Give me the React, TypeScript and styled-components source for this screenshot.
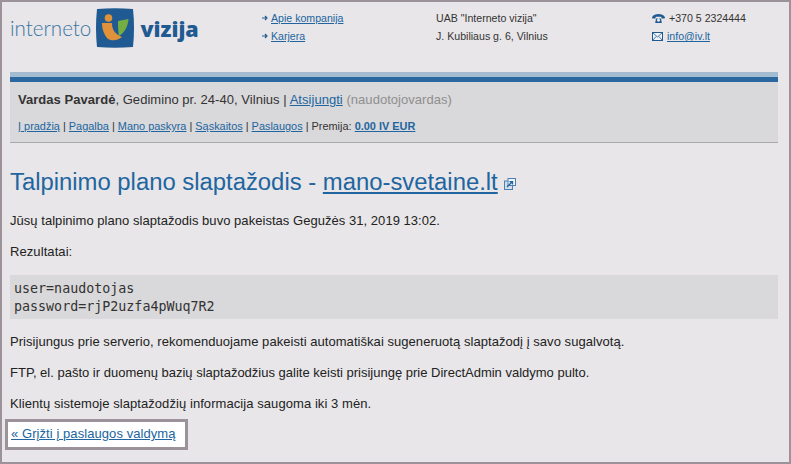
import React from "react"
import styled, { createGlobalStyle } from "styled-components"

const Global = createGlobalStyle`
  html, body {
    margin: 0;
    padding: 0;
    background: #e8e6e8;
  }
  body {
    font-family: "Liberation Sans", Arial, sans-serif;
    font-size: 13px;
    color: #222;
  }
`

const Frame = styled.div`
  box-sizing: border-box;
  width: 791px;
  height: 464px;
  overflow: hidden;
  border: 2px solid #9c9299;
  padding: 0 11px 0 8px;
  background: #e8e6e8;
`

const Header = styled.header`
  display: flex;
  height: 70px;
`

const Logo = styled.div`
  display: flex;
  flex: none;
  align-items: flex-start;
  width: 252px;
  padding-top: 6px;
`

const LogoThin = styled.span`
  font-family: "Lato", sans-serif;
  font-weight: 300;
  font-size: 20.6px;
  line-height: 28px;
  margin-top: 6px;
  color: #3a75a6;
`

const LogoBold = styled.span`
  font-family: "Open Sans", sans-serif;
  font-weight: 800;
  font-size: 21.5px;
  line-height: 28px;
  margin: 7px 0 0 5px;
  color: #1f5a92;
`

const LogoMark = styled.svg`
  margin-left: 4px;
  flex: none;
`

const HeadCol = styled.div<{ $w: number }>`
  width: ${(p) => p.$w}px;
  flex: none;
  padding-top: 7px;
  font-size: 10.6px;
  line-height: 18px;
  color: #333;
  display: flex;
  flex-direction: column;
`

const HeadRow = styled.div`
  display: flex;
  align-items: center;
  height: 18px;
`

const HeadIcon = styled.svg<{ $gap: number }>`
  flex: none;
  margin-right: ${(p) => p.$gap}px;
`

const Link = styled.a`
  color: #2065a0;
  text-decoration: underline;
  cursor: pointer;
`

const Panel = styled.section`
  background: #d9d8da;
  border-bottom: 1px solid #a9a8aa;
`

const PanelBar = styled.div`
  height: 5px;
  background: #a3bccf;
  border-bottom: 5px solid #2b689f;
`

const PanelBody = styled.div`
  padding: 10px 8px 0;
  height: 50px;
`

const UserLine = styled.div`
  font-size: 13px;
  letter-spacing: 0.04px;
  line-height: 16px;
  color: #333;
`

const Muted = styled.span`
  color: #8f8f8f;
`

const NavLine = styled.div`
  font-size: 10.93px;
  line-height: 14px;
  margin-top: 11px;
  color: #333;
`

const Title = styled.h1`
  font-size: 23.85px;
  line-height: 32px;
  font-weight: normal;
  margin: 23px 0 0;
  color: #2065a0;
`

const ExtIcon = styled.svg`
  margin-left: 6px;
  vertical-align: 0;
`

const Para = styled.p<{ $track?: number }>`
  margin: 0;
  font-size: 13px;
  letter-spacing: ${(p) => p.$track ?? 0}px;
  line-height: 16px;
  color: #222;
  padding-top: 15px;
`

const Code = styled.pre`
  margin: 15px 0 0;
  padding: 5px 4px 3px;
  background: #d9d8da;
  font-family: "DejaVu Sans Mono", monospace;
  font-size: 13.33px;
  line-height: 18px;
  color: #333;
`

const BackBox = styled.div`
  display: inline-block;
  margin: 7px 0 0 -5px;
  padding: 4px 9px 5px 3px;
  border: 3px solid #9c9299;
  background: #fff;
  font-size: 13px;
  letter-spacing: 0.07px;
  line-height: 16px;
`

const Arrow = () => (
  <HeadIcon $gap={3} width="6" height="6" viewBox="0 0 6 6">
    <path d="M0 3h4M3 1l2 2-2 2" fill="none" stroke="#1f5a92" strokeWidth="1.2" />
  </HeadIcon>
)

const Phone = () => (
  <HeadIcon $gap={4} width="13" height="9" viewBox="0 0 13 9">
    <path
      d="M0 3.2C1 .8 4 0 6.5 0S12 .8 13 3.2L12.6 4.4H9.6L9.2 2.7H3.8L3.4 4.4H.4zM3.2 9l.8-4.6h5L9.8 9zM6.5 4.6a1.6 1.6 0 1 0 .01 0z"
      fill="#1f5a92"
    />
  </HeadIcon>
)

const Mail = () => (
  <HeadIcon $gap={4} width="11" height="9" viewBox="0 0 11 9">
    <rect x=".5" y=".5" width="10" height="8" fill="#f2f3f6" stroke="#1f5a92" />
    <path d="M1 1l4.5 4L10 1M1 8l3.2-3.6M10 8L6.8 4.4" fill="none" stroke="#1f5a92" strokeWidth=".8" />
  </HeadIcon>
)

const External = () => (
  <ExtIcon width="12" height="12" viewBox="0 0 12 12">
    <rect x=".5" y="3" width="8" height="8.5" fill="#d3deea" stroke="#4c80b0" />
    <rect x="4" y=".5" width="7.5" height="7" fill="#f0f3f7" stroke="#4c80b0" />
    <path d="M3 9l5-5M5.5 3.6h3v3" fill="none" stroke="#2065a0" strokeWidth="1.3" />
  </ExtIcon>
)

export default function App() {
  return (
    <>
      <Global />
      <Frame>
        <Header>
          <Logo>
            <LogoThin>interneto</LogoThin>
            <LogoMark width="40" height="40" viewBox="0 0 40 40">
              <path d="M2 1Q20 -.5 38 1Q40 20 38 39Q20 40.5 2 39Q0 20 2 1z" fill="#1f5a92" />
              <circle cx="13.5" cy="10" r="3.8" fill="#e0923a" />
              <path d="M7 15H17C17 22 20 26 27 29C22 33 17 33 13 31C9 27 7 21 7 15z" fill="#e0923a" />
              <path d="M23 13L33.5 11C33 18 30 24 24 28C23 22 23 18 23 13z" fill="#74ae43" />
            </LogoMark>
            <LogoBold>vizija</LogoBold>
          </Logo>
          <HeadCol $w={174}>
            <HeadRow>
              <Arrow />
              <Link>Apie kompanija</Link>
            </HeadRow>
            <HeadRow>
              <Arrow />
              <Link>Karjera</Link>
            </HeadRow>
          </HeadCol>
          <HeadCol $w={216}>
            <HeadRow>UAB "Interneto vizija"</HeadRow>
            <HeadRow>J. Kubiliaus g. 6, Vilnius</HeadRow>
          </HeadCol>
          <HeadCol $w={123}>
            <HeadRow>
              <Phone />
              +370 5 2324444
            </HeadRow>
            <HeadRow>
              <Mail />
              <Link>info@iv.lt</Link>
            </HeadRow>
          </HeadCol>
        </Header>

        <Panel>
          <PanelBar />
          <PanelBody>
            <UserLine>
              <b>Vardas Pavardė</b>, Gedimino pr. 24-40, Vilnius | <Link>Atsijungti</Link>{" "}
              <Muted>(naudotojovardas)</Muted>
            </UserLine>
            <NavLine>
              <Link>Į pradžią</Link> | <Link>Pagalba</Link> | <Link>Mano paskyra</Link> |{" "}
              <Link>Sąskaitos</Link> | <Link>Paslaugos</Link> | Premija:{" "}
              <Link>
                <b>0.00 IV EUR</b>
              </Link>
            </NavLine>
          </PanelBody>
        </Panel>

        <Title>
          Talpinimo plano slaptažodis - <Link>mano-svetaine.lt</Link>
          <External />
        </Title>

        <Para $track={0.04}>Jūsų talpinimo plano slaptažodis buvo pakeistas Gegužės 31, 2019 13:02.</Para>
        <Para $track={0.08}>Rezultatai:</Para>
        <Code>{"user=naudotojas\npassword=rjP2uzfa4pWuq7R2"}</Code>
        <Para $track={0.05}>Prisijungus prie serverio, rekomenduojame pakeisti automatiškai sugeneruotą slaptažodį į savo sugalvotą.</Para>
        <Para>FTP, el. pašto ir duomenų bazių slaptažodžius galite keisti prisijungę prie DirectAdmin valdymo pulto.</Para>
        <Para $track={0.07}>Klientų sistemoje slaptažodžių informacija saugoma iki 3 mėn.</Para>
        <BackBox>
          <Link>« Grįžti į paslaugos valdymą</Link>
        </BackBox>
      </Frame>
    </>
  )
}
